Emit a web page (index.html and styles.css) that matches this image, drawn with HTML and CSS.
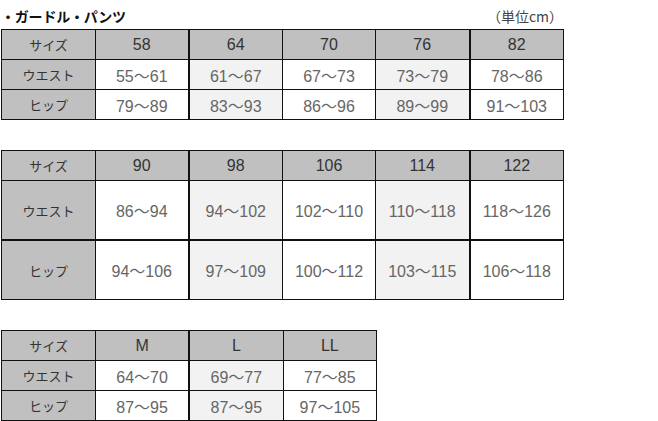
FILE: index.html
```html
<!DOCTYPE html>
<html lang="ja">
<head>
<meta charset="utf-8">
<link rel="stylesheet" href="styles.css">
</head>
<body>
<div class="page">
  <div class="head">
    <span class="title">・ガードル・パンツ</span>
    <span class="unit">（単位cm）</span>
  </div>
  <table class="size t1">
    <colgroup><col class="c1"><col class="c2"><col class="c3"><col class="c4"><col class="c5"><col class="c6"></colgroup>
    <tr class="hd"><th class="lbl">サイズ</th><th>58</th><th class="tk">64</th><th>70</th><th>76</th><th class="tk">82</th></tr>
    <tr><th class="lbl">ウエスト</th><td>55～61</td><td class="alt tk">61～67</td><td>67～73</td><td class="alt">73～79</td><td class="tk">78～86</td></tr>
    <tr><th class="lbl">ヒップ</th><td>79～89</td><td class="alt tk">83～93</td><td>86～96</td><td class="alt">89～99</td><td class="tk">91～103</td></tr>
  </table>
  <table class="size t2">
    <colgroup><col class="c1"><col class="c2"><col class="c3"><col class="c4"><col class="c5"><col class="c6"></colgroup>
    <tr class="hd"><th class="lbl">サイズ</th><th>90</th><th class="tk">98</th><th>106</th><th>114</th><th class="tk">122</th></tr>
    <tr class="tall"><th class="lbl">ウエスト</th><td>86～94</td><td class="alt tk">94～102</td><td>102～110</td><td class="alt">110～118</td><td class="tk">118～126</td></tr>
    <tr class="tall tktop"><th class="lbl">ヒップ</th><td>94～106</td><td class="alt tk">97～109</td><td>100～112</td><td class="alt">103～115</td><td class="tk">106～118</td></tr>
  </table>
  <table class="size t3">
    <colgroup><col class="c1"><col class="c2"><col class="c3"><col class="c4"></colgroup>
    <tr class="hd"><th class="lbl">サイズ</th><th>M</th><th class="tk">L</th><th>LL</th></tr>
    <tr><th class="lbl">ウエスト</th><td>64～70</td><td class="alt tk">69～77</td><td>77～85</td></tr>
    <tr><th class="lbl">ヒップ</th><td>87～95</td><td class="alt tk">87～95</td><td>97～105</td></tr>
  </table>
</div>
</body>
</html>
```
FILE: styles.css
```css
html, body {
  margin: 0;
  padding: 0;
  background: #fff;
}
.page {
  padding-left: 1px;
  font-family: "Liberation Sans", "Noto Sans CJK JP", sans-serif;
  color: #333;
}
.head {
  width: 562px;
  height: 29px;
  display: flex;
  justify-content: space-between;
  align-items: center;
  padding-top: 3px;
  box-sizing: border-box;
}
.title {
  font-family: "Noto Sans CJK JP", sans-serif;
  font-weight: bold;
  font-size: 14px;
  color: #111;
  margin-left: 0;
  letter-spacing: -0.2px;
}
.unit {
  font-family: "Noto Sans CJK JP", sans-serif;
  font-size: 14px;
  color: #444;
}
.size {
  border-collapse: collapse;
  table-layout: fixed;
  border: 1px solid #111;
}
.t1, .t2 { width: 563px; margin-bottom: 30px; }
.t3 { width: 376px; }
.c1 { width: 94px; }
.c2 { width: 93px; }
.c3 { width: 94px; }
.c4 { width: 93px; }
.c5 { width: 94px; }
.c6 { width: 94px; }
.size th, .size td {
  border: 1px solid #111;
  height: 29px;
  padding: 0;
  text-align: center;
  vertical-align: middle;
  font-weight: normal;
  font-size: 16px;
  color: #666;
  background: #fff;
}
.size tr.hd th {
  background: #c0c0c0;
  color: #333;
}
.size th.lbl {
  background: #c0c0c0;
  font-family: "Noto Sans CJK JP", sans-serif;
  font-size: 13px;
  color: #333;
}
.size td.alt { background: #f2f2f2; }
.size .tk { border-left: 2px solid #111; }
.size tr.tall th, .size tr.tall td { height: 58px; }
.size tr.tktop th, .size tr.tktop td { border-top: 2px solid #111; }
```
